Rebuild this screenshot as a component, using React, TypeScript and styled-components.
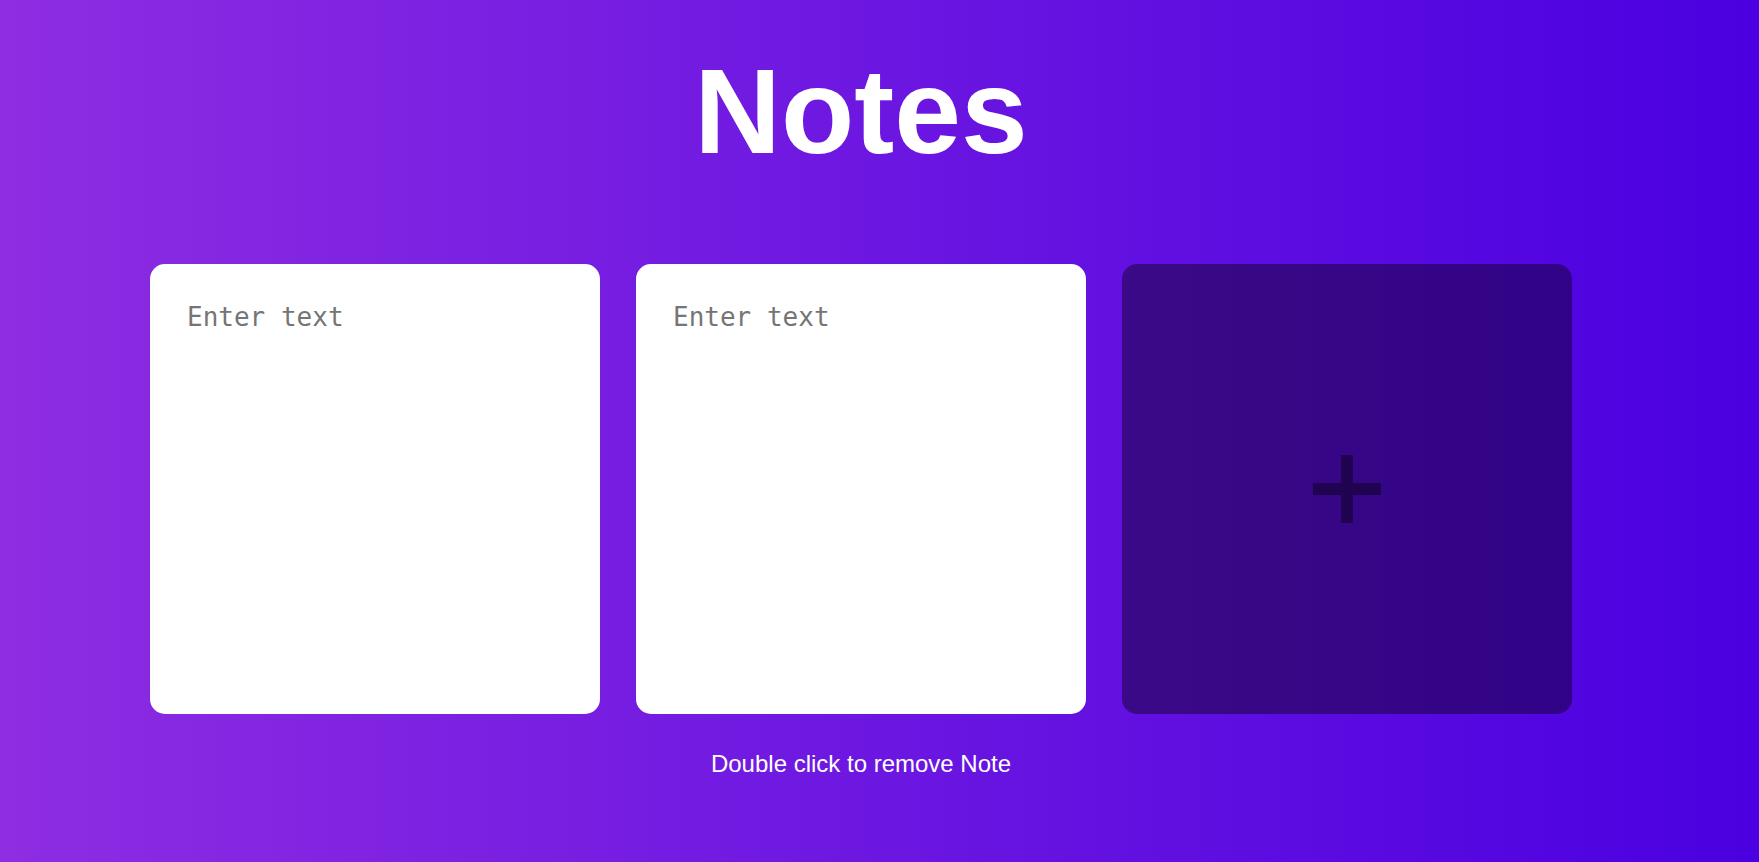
import React from "react";
import styled, { createGlobalStyle } from "styled-components";

const GlobalStyle = createGlobalStyle`
  html, body {
    margin: 0;
    padding: 0;
    min-height: 100%;
  }
  body {
    min-height: 100vh;
    background: linear-gradient(to right, #8e2de2, #4a00e0);
    font-family: "Liberation Sans", Arial, sans-serif;
  }
`;

const Page = styled.main`
  display: flex;
  flex-direction: column;
  align-items: center;
  padding: 42px 37px 0 0;
  box-sizing: border-box;
  min-height: 100vh;
`;

const Title = styled.h1`
  margin: 0;
  font-family: "Liberation Sans", Arial, sans-serif;
  font-weight: 700;
  font-size: 120px;
  line-height: 138px;
  color: #ffffff;
`;

const Grid = styled.section`
  margin-top: 84px;
  display: grid;
  grid-template-columns: repeat(3, 450px);
  gap: 36px;
`;

const NoteArea = styled.textarea`
  width: 450px;
  height: 450px;
  box-sizing: border-box;
  padding: 38px 36px 36px 37px;
  border: none;
  border-radius: 15px;
  background: #ffffff;
  resize: none;
  outline: none;
  font-family: "DejaVu Sans Mono", monospace;
  font-size: 26px;
  color: #222;
  &::placeholder {
    color: #757575;
  }
`;

const AddButton = styled.button`
  width: 450px;
  height: 450px;
  border: none;
  border-radius: 15px;
  background: rgba(0, 0, 0, 0.4);
  display: flex;
  align-items: center;
  justify-content: center;
  cursor: pointer;
  padding: 0;
`;

const Hint = styled.p`
  margin: 36px 0 0;
  font-family: "Liberation Sans", Arial, sans-serif;
  font-size: 24px;
  line-height: 28px;
  color: #ffffff;
`;

const PlusIcon = () => (
  <svg width="68" height="68" viewBox="0 0 68 68" aria-hidden="true">
    <rect x="28" y="0" width="12" height="68" fill="rgba(0,0,0,0.4)" />
    <rect x="0" y="28" width="28" height="12" fill="rgba(0,0,0,0.4)" />
    <rect x="40" y="28" width="28" height="12" fill="rgba(0,0,0,0.4)" />
  </svg>
);

export default function App() {
  return (
    <>
      <GlobalStyle />
      <Page>
        <Title>Notes</Title>
        <Grid>
          <NoteArea placeholder="Enter text" />
          <NoteArea placeholder="Enter text" />
          <AddButton aria-label="Add note">
            <PlusIcon />
          </AddButton>
        </Grid>
        <Hint>Double click to remove Note</Hint>
      </Page>
    </>
  );
}
